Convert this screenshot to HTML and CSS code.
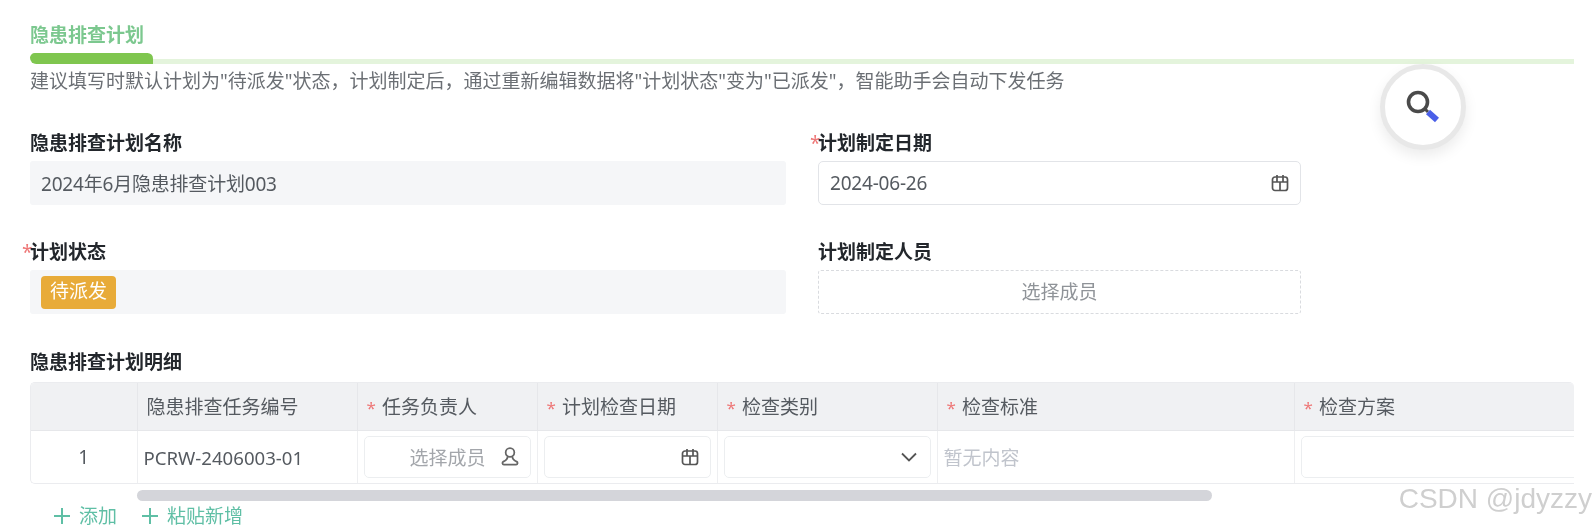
FILE: index.html
```html
<!DOCTYPE html>
<html lang="zh-CN">
<head>
<meta charset="utf-8">
<title>隐患排查计划</title>
<link rel="stylesheet" href="styles.css">
</head>
<body>
<main class="page">
  <h1 class="section-title">隐患排查计划</h1>
  <div class="tabbar"><span class="tabbar-active"></span><span class="tabbar-rest"></span></div>
  <p class="hint">建议填写时默认计划为"待派发"状态，计划制定后，通过重新编辑数据将"计划状态"变为"已派发"，智能助手会自动下发任务</p>

  <section class="form-grid">
    <div class="field">
      <div class="field-label">隐患排查计划名称</div>
      <div class="readonly narrow">2024年6月隐患排查计划003</div>
    </div>
    <div class="field">
      <div class="field-label required">计划制定日期</div>
      <div class="input">
        <span class="narrow">2024-06-26</span>
        <svg class="icon" viewBox="0 0 18 18"><use href="#calendar"/></svg>
      </div>
    </div>
    <div class="field">
      <div class="field-label required">计划状态</div>
      <div class="readonly"><span class="badge">待派发</span></div>
    </div>
    <div class="field">
      <div class="field-label">计划制定人员</div>
      <div class="member-picker">选择成员</div>
    </div>
  </section>

  <div class="field-label table-label">隐患排查计划明细</div>
  <div class="table-wrap">
    <table class="detail">
      <colgroup>
        <col class="c-index"><col class="c-code"><col class="c-owner"><col class="c-date"><col class="c-type"><col class="c-std"><col class="c-plan">
      </colgroup>
      <thead>
        <tr>
          <th></th>
          <th class="plain">隐患排查任务编号</th>
          <th><i>*</i>任务负责人</th>
          <th><i>*</i>计划检查日期</th>
          <th><i>*</i>检查类别</th>
          <th><i>*</i>检查标准</th>
          <th><i>*</i>检查方案</th>
        </tr>
      </thead>
      <tbody>
        <tr>
          <td class="index">1</td>
          <td class="code">PCRW-2406003-01</td>
          <td class="ctl"><div class="cell-input owner"><span class="placeholder">选择成员</span>
            <svg class="icon person" viewBox="0 0 18 18"><circle cx="9" cy="5" r="3.900" fill="none" stroke="#666" stroke-width="1.600"/><path d="M6.800 8.800c0 2.200-1.500 3.300-3.800 4.400-1.200.6-1 2.600.5 2.600h11c1.500 0 1.700-2 .5-2.600C12.300 12.100 11.200 11 11.200 8.800" fill="none" stroke="#666" stroke-width="1.600"/></svg>
          </div></td>
          <td class="ctl"><div class="cell-input"><svg class="icon" viewBox="0 0 18 18"><use href="#calendar"/></svg></div></td>
          <td class="ctl"><div class="cell-input"><svg class="icon chevron" viewBox="0 0 18 18"><path d="M2 5.500l7 7 7-7" fill="none" stroke="#555" stroke-width="1.800"/></svg></div></td>
          <td class="empty">暂无内容</td>
          <td class="ctl last"><div class="cell-input"></div></td>
        </tr>
      </tbody>
    </table>
  </div>
  <div class="scroll-track"><span class="scroll-thumb"></span></div>
  <div class="actions">
    <span class="action"><svg class="plus" viewBox="0 0 16 16"><path d="M8 0v16M0 8h16" stroke="#5fbfa5" stroke-width="2"/></svg>添加</span>
    <span class="action"><svg class="plus" viewBox="0 0 16 16"><path d="M8 0v16M0 8h16" stroke="#5fbfa5" stroke-width="2"/></svg>粘贴新增</span>
  </div>
</main>

<div class="search-fab">
  <svg viewBox="0 0 40 40" class="search-icon">
    <circle cx="15" cy="15" r="9.500" fill="none" stroke="#4a4a4a" stroke-width="3.600"/>
    <path d="M22 22l3 3" stroke="#4a4a4a" stroke-width="3"/>
    <path d="M25 25l9 8" stroke="#4a5fe8" stroke-width="6"/>
  </svg>
</div>
<div class="watermark">CSDN @jdyzzy</div>

<svg class="defs" aria-hidden="true">
  <symbol id="calendar" viewBox="0 0 18 18">
    <rect x="1.500" y="3" width="15" height="13.500" rx="2.500" fill="none" stroke="#555" stroke-width="1.700"/>
    <path d="M1.500 8h15M6 1v7M12 1v7M9 8v8" fill="none" stroke="#555" stroke-width="1.700"/>
  </symbol>
</svg>
</body>
</html>
```
FILE: styles.css
```css
* { box-sizing: border-box; }
html, body { margin: 0; height: 526px; overflow: hidden; background: #fff; }
body {
  position: relative;
  font-family: "Noto Sans", "Noto Sans CJK SC", sans-serif;
  font-size: 19px;
  color: #555a60;
  filter: blur(0.6px);
}
.defs { position: absolute; width: 0; height: 0; }
.page { padding: 22px 18px 0 30px; }

.section-title {
  margin: 0;
  height: 31px;
  font-size: 19px;
  line-height: 26px;
  font-weight: 700;
  color: #7cc88f;
}
.tabbar { display: flex; align-items: flex-end; height: 11px; }
.tabbar-active { width: 123px; height: 11px; background: #7fc64f; border-radius: 7px 8px 0 9px; }
.tabbar-rest { flex: 1; height: 5px; background: #e4f4dc; }
.hint { margin: 0 0 32px; line-height: 34px; font-size: 19px; color: #6b6f74; white-space: nowrap; }

.form-grid {
  display: grid;
  grid-template-columns: 756px 483px;
  column-gap: 32px;
  row-gap: 34px;
}
.field-label {
  height: 26px;
  line-height: 26px;
  margin-bottom: 5px;
  font-weight: 700;
  color: #23272c;
}
.required::before {
  content: "*";
  display: inline-block;
  width: 8px;
  margin-left: -8px;
  font-weight: 400;
  color: #e77;
}
.narrow { letter-spacing: -0.2px; }
.readonly {
  display: flex;
  align-items: center;
  height: 44px;
  padding: 0 11px;
  background: #f5f6f8;
  border-radius: 3px;
  color: #555a60;
}
.badge {
  height: 33px;
  line-height: 31px;
  padding: 0 9px;
  background: #e8ab39;
  border-radius: 4px;
  color: #fff;
}
.input {
  display: flex;
  align-items: center;
  justify-content: space-between;
  height: 44px;
  padding: 0 11px;
  border: 1px solid #e2e4e8;
  border-radius: 5px;
}
.icon { width: 18px; height: 18px; flex: none; }
.member-picker {
  height: 44px;
  line-height: 42px;
  text-align: center;
  border: 1px dashed #d9dbdf;
  border-radius: 3px;
  color: #8f9398;
}

.table-label { margin: 35px 0 7px; }
.table-wrap {
  width: 1544px;
  height: 102px;
  overflow: hidden;
  border: 1px solid #ebecef;
  border-right: 0;
  border-radius: 5px 5px 0 5px;
}
.detail { table-layout: fixed; width: 1643px; border-collapse: collapse; }
.c-index { width: 106px; }
.c-code { width: 220px; }
.c-owner { width: 180px; }
.c-date { width: 180px; }
.c-type { width: 220px; }
.c-std { width: 357px; }
.c-plan { width: 380px; }
.detail th {
  height: 47px;
  padding: 0 0 0 9px;
  background: #f0f1f3;
  border-left: 1px solid #e6e7ea;
  border-bottom: 1px solid #e6e7ea;
  text-align: left;
  font-weight: 400;
  color: #555a60;
}
.detail th:first-child, .detail td:first-child { border-left: 0; }
.detail th i {
  font-style: normal;
  color: #e77;
  margin: 0 6px 0 0;
  font-size: 17px;
}
.detail td { height: 54px; padding: 0; border-left: 1px solid #eeeff1; }
.detail td.index { text-align: center; }
.detail td.code { padding-left: 6px; white-space: nowrap; font-size: 18.600px; }
.detail td.ctl { padding: 0 6px; }
.detail td.last { padding-right: 0; }
.detail td.empty { padding-left: 6px; color: #c0c4cc; }
.cell-input {
  display: flex;
  align-items: center;
  justify-content: flex-end;
  height: 42px;
  padding: 0 11px;
  border: 1px solid #eceef0;
  border-radius: 5px;
}
.cell-input.owner { gap: 14px; padding-right: 10px; }
.person { width: 20px; height: 20px; }
.placeholder { color: #a3a6ab; }
.chevron { margin-right: 1px; }

.scroll-track { height: 11px; margin: 6px 0 0 107px; width: 1075px; }
.scroll-thumb { display: block; height: 100%; background: #d4d5da; border-radius: 6px; }

.actions { display: flex; gap: 25px; padding-left: 24px; margin-top: 2px; }
.action { display: flex; align-items: center; gap: 9px; line-height: 26px; color: #5fbfa5; }
.plus { width: 16px; height: 16px; }

.search-fab {
  position: absolute;
  left: 1380px;
  top: 64px;
  width: 86px;
  height: 86px;
  display: flex;
  align-items: center;
  justify-content: center;
  background: #fff;
  border: 5px solid #e8e8e8;
  border-radius: 50%;
  box-shadow: 0 6px 14px rgba(0, 0, 0, .08);
}
.search-icon { width: 40px; height: 40px; }
.watermark {
  position: absolute;
  right: 0;
  top: 483px;
  font-family: "Liberation Sans", sans-serif;
  font-size: 28px;
  line-height: 32px;
  color: #cfcfcf;
  white-space: nowrap;
}
```
